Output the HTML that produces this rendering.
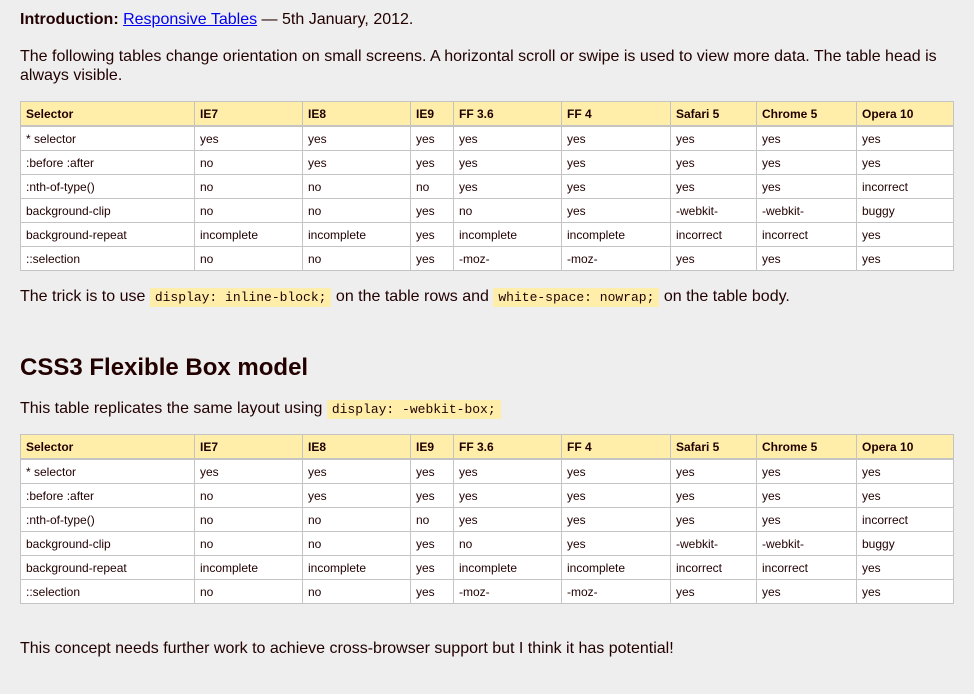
<!DOCTYPE html>
<html><head><style>
body{margin:0;background:#eee;font-family:"Liberation Sans",Arial,sans-serif;color:#200;font-size:16px;}
.w{position:absolute;left:20px;width:934px;}
p{margin:0;line-height:19px;}
a{color:#00e;}
table{border-collapse:collapse;width:934px;font-size:12px;background:#fff;table-layout:fixed;}
th,td{border:1px solid #c4c4c4;padding:0 5px;text-align:left;height:23px;}
th{background:#ffeeaa;height:23px;border-bottom:2px solid #c4c4c4;}
code{font-family:"Liberation Mono",monospace;font-size:13px;background:#ffeeaa;padding:2px 5px;}
h2{margin:0;font-size:24px;font-weight:bold;}
</style></head><body>
<div class="w" style="top:10px"><p><b>Introduction:</b> <a href="#">Responsive Tables</a> — 5th January, 2012.</p></div>
<div class="w" style="top:47px"><p>The following tables change orientation on small screens. A horizontal scroll or swipe is used to view more data. The table head is always visible.</p></div>
<div class="w" style="top:101px">
<table><colgroup><col style="width:174px"><col style="width:108px"><col style="width:108px"><col style="width:43px"><col style="width:108px"><col style="width:109px"><col style="width:86px"><col style="width:100px"><col></colgroup>
<tr><th>Selector</th><th>IE7</th><th>IE8</th><th>IE9</th><th>FF 3.6</th><th>FF 4</th><th>Safari 5</th><th>Chrome 5</th><th>Opera 10</th></tr>
<tr><td>* selector</td><td>yes</td><td>yes</td><td>yes</td><td>yes</td><td>yes</td><td>yes</td><td>yes</td><td>yes</td></tr>
<tr><td>:before :after</td><td>no</td><td>yes</td><td>yes</td><td>yes</td><td>yes</td><td>yes</td><td>yes</td><td>yes</td></tr>
<tr><td>:nth-of-type()</td><td>no</td><td>no</td><td>no</td><td>yes</td><td>yes</td><td>yes</td><td>yes</td><td>incorrect</td></tr>
<tr><td>background-clip</td><td>no</td><td>no</td><td>yes</td><td>no</td><td>yes</td><td>-webkit-</td><td>-webkit-</td><td>buggy</td></tr>
<tr><td>background-repeat</td><td>incomplete</td><td>incomplete</td><td>yes</td><td>incomplete</td><td>incomplete</td><td>incorrect</td><td>incorrect</td><td>yes</td></tr>
<tr><td>::selection</td><td>no</td><td>no</td><td>yes</td><td>-moz-</td><td>-moz-</td><td>yes</td><td>yes</td><td>yes</td></tr>
</table></div>
<div class="w" style="top:287px"><p>The trick is to use <code>display: inline-block;</code> on the table rows and <code>white-space: nowrap;</code> on the table body.</p></div>
<div class="w" style="top:354px"><h2>CSS3 Flexible Box model</h2></div>
<div class="w" style="top:399px"><p>This table replicates the same layout using <code>display: -webkit-box;</code></p></div>
<div class="w" style="top:434px">
<table><colgroup><col style="width:174px"><col style="width:108px"><col style="width:108px"><col style="width:43px"><col style="width:108px"><col style="width:109px"><col style="width:86px"><col style="width:100px"><col></colgroup>
<tr><th>Selector</th><th>IE7</th><th>IE8</th><th>IE9</th><th>FF 3.6</th><th>FF 4</th><th>Safari 5</th><th>Chrome 5</th><th>Opera 10</th></tr>
<tr><td>* selector</td><td>yes</td><td>yes</td><td>yes</td><td>yes</td><td>yes</td><td>yes</td><td>yes</td><td>yes</td></tr>
<tr><td>:before :after</td><td>no</td><td>yes</td><td>yes</td><td>yes</td><td>yes</td><td>yes</td><td>yes</td><td>yes</td></tr>
<tr><td>:nth-of-type()</td><td>no</td><td>no</td><td>no</td><td>yes</td><td>yes</td><td>yes</td><td>yes</td><td>incorrect</td></tr>
<tr><td>background-clip</td><td>no</td><td>no</td><td>yes</td><td>no</td><td>yes</td><td>-webkit-</td><td>-webkit-</td><td>buggy</td></tr>
<tr><td>background-repeat</td><td>incomplete</td><td>incomplete</td><td>yes</td><td>incomplete</td><td>incomplete</td><td>incorrect</td><td>incorrect</td><td>yes</td></tr>
<tr><td>::selection</td><td>no</td><td>no</td><td>yes</td><td>-moz-</td><td>-moz-</td><td>yes</td><td>yes</td><td>yes</td></tr>
</table></div>
<div class="w" style="top:639px"><p>This concept needs further work to achieve cross-browser support but I think it has potential!</p></div>
</body></html>
